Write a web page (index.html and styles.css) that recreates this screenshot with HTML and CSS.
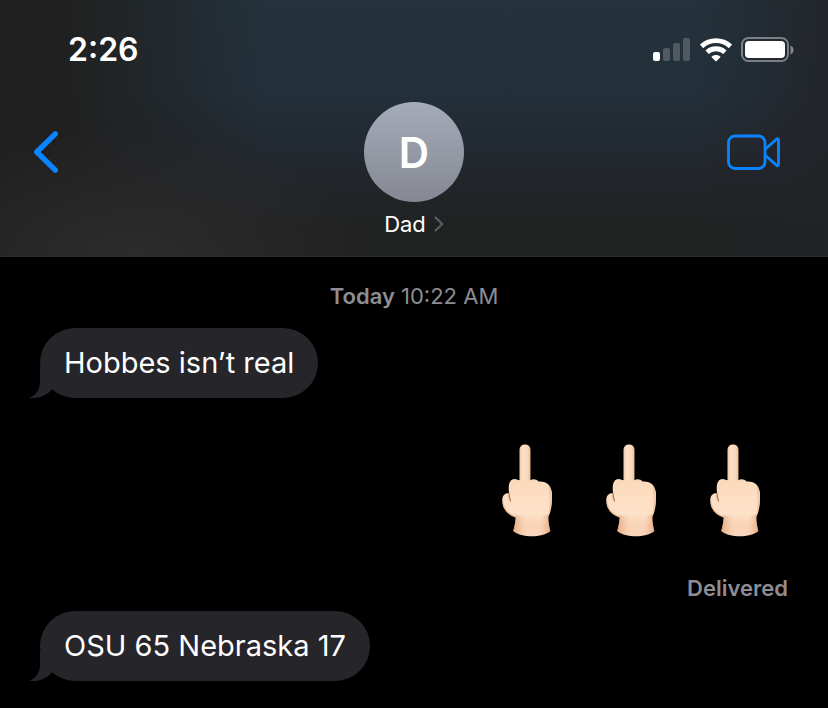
FILE: index.html
```html
<!DOCTYPE html>
<html lang="en">
<head>
    <meta charset="UTF-8">
    <meta name="viewport" content="width=device-width, initial-scale=1.0">
    <title>Dad</title>
    <link rel="stylesheet" href="styles.css">
</head>

<body>
<header class="header">
    <div class="status-bar">
        <time class="clock">2:26</time>
        <div class="status-icons">
            <svg class="signal" width="38" height="24" viewBox="0 0 38 24" aria-label="Signal">
                <rect x="0" y="14" width="7" height="9" rx="2" fill="#fff"/>
                <g fill="#fff" fill-opacity="0.2">
                    <rect x="10" y="10" width="7" height="13" rx="2"/>
                    <rect x="20" y="5" width="7" height="18" rx="2"/>
                    <rect x="30" y="0" width="7" height="23" rx="2"/>
                </g>
            </svg>
            <svg class="wifi" width="32" height="24" viewBox="0 0 32 24" aria-label="Wi-Fi">
                <g fill="none" stroke="#fff" stroke-width="4.8">
                    <path d="M1.600 8.400C9.600 .7 22.400 .7 30.400 8.400"/>
                    <path d="M7.100 14.200C12.100 9.600 19.900 9.600 24.900 14.200"/>
                </g>
                <path d="M11.700 18.400c2.500-2 6.100-2 8.600 0 .3.200.3.500 0 .8l-3.600 3.700c-.4.400-1 .4-1.400 0l-3.600-3.700c-.3-.3-.3-.6 0-.8z" fill="#fff"/>
            </svg>
            <svg class="battery" width="54" height="26" viewBox="0 0 54 26" aria-label="Battery">
                <rect x="1" y="1" width="46" height="23" rx="6.500" fill="none" stroke="#fff" stroke-opacity="0.4" stroke-width="2"/>
                <rect x="4" y="4" width="40" height="17" rx="4" fill="#fff"/>
                <path d="M49.500 8.500c4 1.500 4 7.500 0 9z" fill="#fff" fill-opacity="0.45"/>
            </svg>
        </div>
    </div>

    <nav class="nav">
        <button class="icon-button back" aria-label="Back">
            <svg width="26" height="44" viewBox="0 0 26 44">
                <path d="M23.300 3.800 4.800 22l18.500 18.200" fill="none" stroke="#0a84ff" stroke-width="5.400" stroke-linecap="round" stroke-linejoin="round"/>
            </svg>
        </button>
        <button class="contact">
            <span class="avatar">D</span>
            <span class="contact-name">
                Dad
                <svg width="10" height="16" viewBox="0 0 10 16">
                    <path d="M1.500 1.500 8.300 8l-6.800 6.500" fill="none" stroke="#5d5e62" stroke-width="2" stroke-linecap="round" stroke-linejoin="round"/>
                </svg>
            </span>
        </button>
        <button class="icon-button video" aria-label="FaceTime">
            <svg width="54" height="36" viewBox="0 0 54 36">
                <g fill="none" stroke="#0a84ff" stroke-width="2.800" stroke-linejoin="round">
                    <rect x="1.500" y="2" width="36.500" height="32.500" rx="6.500"/>
                    <path d="M38.500 15 49.500 5.200c1-.8 2-.4 2 .8v24.500c0 1.200-1 1.600-2 .8L38.500 21.500"/>
                </g>
            </svg>
        </button>
    </nav>
</header>

<main class="messages">
    <p class="timestamp"><b>Today</b> 10:22 AM</p>

    <div class="message received">
        <p class="bubble">Hobbes isn’t real</p>
        <svg class="tail" width="26" height="30" viewBox="0 0 26 30">
            <path d="M11 0v13c0 8-3.500 14.500-11 16.800 9 1.500 17-1.800 22.500-7.800L26 0z"/>
        </svg>
    </div>

    <!-- EMOJI MESSAGE -->
    <div class="message sent">
        <svg class="emoji" viewBox="0 0 56 100" role="img" aria-label="Middle finger">
            <defs>
                <linearGradient id="palm" x1="0" y1="0" x2="0" y2="1">
                    <stop offset="0" stop-color="#fbd9bb"/>
                    <stop offset="0.600" stop-color="#fde2c9"/>
                    <stop offset="0.800" stop-color="#f9d3b7"/>
                    <stop offset="1" stop-color="#f8d5ba"/>
                </linearGradient>
                <linearGradient id="edge" x1="0" y1="0" x2="1" y2="0">
                    <stop offset="0" stop-color="#d98e62" stop-opacity="0.600"/>
                    <stop offset="0.350" stop-color="#f0b890" stop-opacity="0"/>
                    <stop offset="0.700" stop-color="#f0b890" stop-opacity="0"/>
                    <stop offset="1" stop-color="#d98e62" stop-opacity="0.550"/>
                </linearGradient>
                <linearGradient id="finger" x1="0" y1="0" x2="1" y2="0">
                    <stop offset="0" stop-color="#efc8a8"/>
                    <stop offset="0.300" stop-color="#fcdfc6"/>
                    <stop offset="0.800" stop-color="#f9d6b9"/>
                    <stop offset="1" stop-color="#e5b48f"/>
                </linearGradient>
                <symbol id="hand" viewBox="0 0 56 100">
                    <path d="M19.500 46V10c0-7.300 11-7.300 11 0v36z" fill="url(#finger)"/>
                    <path d="M9 53c-1-8 .5-14 5.500-14 2.500 0 3.500 1.300 5 1.300h11c2-1.800 6-1.500 8 1.200 7.500-.8 13 3.500 13.500 12 .3 9-.5 17-3.700 23.500 0 5 .8 9 2 14-8 7-29 7-37 0 1.200-5 2.200-9 2.400-14C9 75.500 2.500 69 2.300 60c0-4 2.200-7 6.700-7z" fill="url(#palm)"/>
                    <path d="M15.700 75v2c-.2 5-1.200 9-2.400 14 8 7 29 7 37 0-1.200-5-2-9-2-14l1-3c-8 3-26 4-33.600 1z" fill="url(#edge)"/>
                    <path d="M48 44.500c6 5.500 4.500 23 .3 32.500 1-10 2.500-23-.3-32.500z" fill="#e7b48f" fill-opacity="0.500"/>
                    <path d="M9 53.500c.2 3.800.5 5.500 1.500 7.500" fill="none" stroke="#b8754d" stroke-width="1.300" stroke-linecap="round"/>
                    <path d="M3 63c1 7 6 11.500 13 14" fill="none" stroke="#edbd98" stroke-width="1.400"/>
                </symbol>
            </defs>
            <use href="#hand"/>
        </svg>
        <svg class="emoji" viewBox="0 0 56 100" role="img" aria-label="Middle finger"><use href="#hand"/></svg>
        <svg class="emoji" viewBox="0 0 56 100" role="img" aria-label="Middle finger"><use href="#hand"/></svg>
    </div>
    <p class="receipt">Delivered</p>
    <!-- END -->

    <div class="message received">
        <p class="bubble">OSU 65 Nebraska 17</p>
        <svg class="tail" width="26" height="30" viewBox="0 0 26 30">
            <path d="M11 0v13c0 8-3.500 14.500-11 16.800 9 1.500 17-1.800 22.500-7.800L26 0z"/>
        </svg>
    </div>
</main>
</body>
</html>
```
FILE: styles.css
```css
* {
    box-sizing: border-box;
}

body {
    margin: 0;
    background-color: #000;
    color: #fff;
    font-family: Inter, "Liberation Sans", sans-serif;
}

p {
    margin: 0;
}

button {
    padding: 0;
    border: none;
    background: none;
    color: inherit;
    font: inherit;
    cursor: pointer;
}

svg {
    display: block;
}

.header {
    padding: 30px 32px 18px;
    border-bottom: 1px solid #2a2a2b;
    background:
        radial-gradient(ellipse 30% 50% at 16% 100%, rgba(46, 45, 46, 0.9), transparent),
        linear-gradient(to right, #202020 8%, rgba(32, 32, 32, 0) 32%, rgba(32, 32, 32, 0) 84%, rgba(34, 35, 39, 0.8)),
        linear-gradient(#24323b, #23303a 35%, #22272d 65%, #202121 90%);
}

.status-bar {
    display: flex;
    justify-content: space-between;
    align-items: center;
    height: 40px;
    padding: 0 1px 0 36px;
}

.clock {
    font-size: 32px;
    line-height: 40px;
    font-weight: 600;
}

.status-icons {
    display: flex;
    align-items: center;
    gap: 9px;
}

.nav {
    display: grid;
    grid-template-columns: 1fr auto 1fr;
    margin-top: 32px;
}

.icon-button {
    display: flex;
    align-items: center;
    height: 100px;
}

.video {
    justify-self: end;
    margin-right: 15px;
}

.contact {
    display: flex;
    flex-direction: column;
    align-items: center;
    gap: 8px;
}

.avatar {
    display: flex;
    justify-content: center;
    align-items: center;
    width: 100px;
    height: 100px;
    border-radius: 50%;
    background: linear-gradient(#a5abb8, #858892);
    font-size: 42px;
    font-weight: 600;
}

.contact-name {
    display: flex;
    align-items: center;
    gap: 8px;
    font-size: 22px;
    line-height: 28px;
}

.messages {
    display: flex;
    flex-direction: column;
    padding: 25px 40px;
}

.timestamp,
.receipt {
    color: #8d8d93;
    font-size: 22px;
    line-height: 28px;
}

.timestamp {
    margin-bottom: 18px;
    text-align: center;
}

.timestamp b {
    font-weight: 600;
}

.receipt {
    margin-bottom: 9px;
    text-align: right;
    font-weight: 600;
}

.received {
    position: relative;
    align-self: flex-start;
}

.bubble {
    padding: 16px 24px;
    border-radius: 35px;
    background-color: #26252a;
    font-size: 29px;
    line-height: 38px;
}

/* tail hangs off the lower left corner */
.tail {
    position: absolute;
    left: -11px;
    bottom: 0;
    fill: #26252a;
}

.sent {
    display: flex;
    justify-content: flex-end;
    gap: 48px;
    padding: 42px 24px 34px 0;
}

.emoji {
    width: 56px;
    height: 100px;
}
```
